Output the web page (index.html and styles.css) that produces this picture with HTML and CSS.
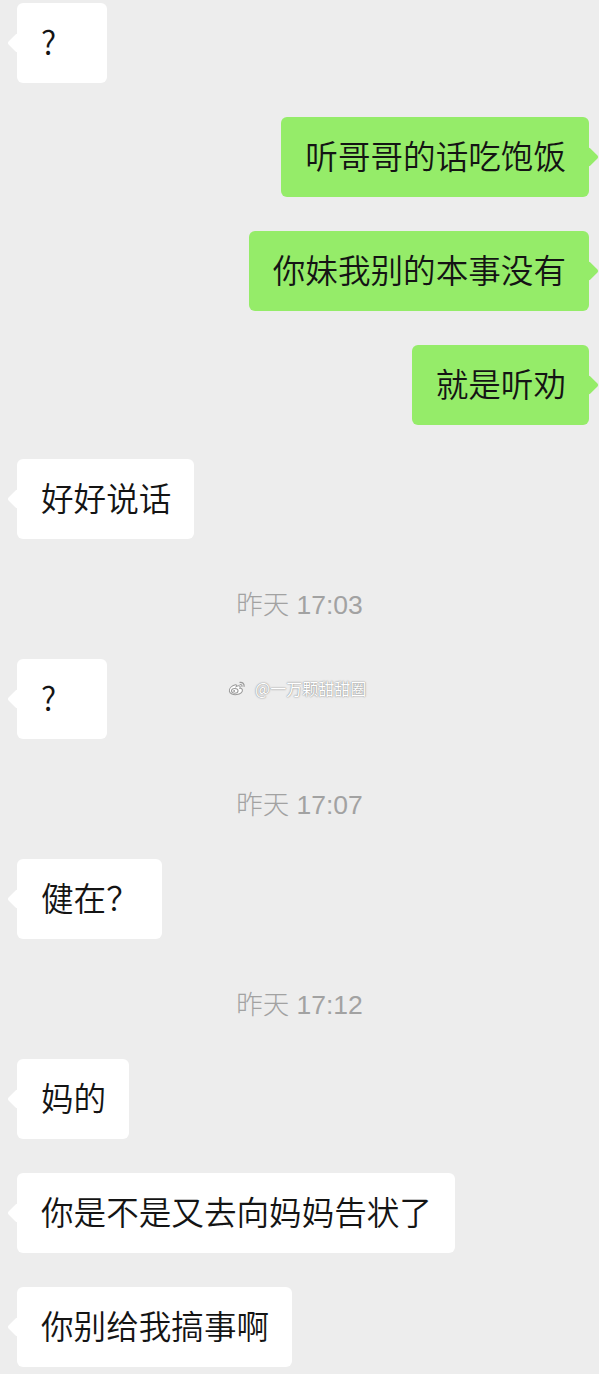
FILE: index.html
```html
<!DOCTYPE html>
<html lang="zh">
<head>
<meta charset="utf-8">
<title>chat</title>
<link rel="stylesheet" href="styles.css">
</head>
<body>
<div class="chat">
  <div class="row left"><div class="bubble minw">?</div></div>
  <div class="row right"><div class="bubble green">听哥哥的话吃饱饭</div></div>
  <div class="row right"><div class="bubble green">你妹我别的本事没有</div></div>
  <div class="row right"><div class="bubble green">就是听劝</div></div>
  <div class="row left"><div class="bubble">好好说话</div></div>
  <div class="time">昨天 17:03</div>
  <div class="row left"><div class="bubble minw">?</div></div>
  <div class="time">昨天 17:07</div>
  <div class="row left"><div class="bubble">健在？</div></div>
  <div class="time">昨天 17:12</div>
  <div class="row left"><div class="bubble">妈的</div></div>
  <div class="row left"><div class="bubble">你是不是又去向妈妈告状了</div></div>
  <div class="row left"><div class="bubble">你别给我搞事啊</div></div>
  <div class="watermark">
    <svg class="wb" width="18" height="16" viewBox="0 0 17 15">
      <path d="M7 4.5 C3.5 5.5 1 8 1.3 10.4 C1.7 13 5 14.2 8.3 13.7 C11.8 13.2 14 11.2 13.6 9.2 C13.3 7.9 12 7.6 11.2 7.8 C11.8 6.6 11.6 5.6 10.3 5.4 C9.3 5.3 8.3 5.8 7.7 6.2 C8.1 5.1 8.2 4.3 7 4.5 Z" fill="#fff" stroke="#9a9a9a" stroke-width="1"/>
      <ellipse cx="6.4" cy="10.2" rx="3.1" ry="2.3" fill="none" stroke="#9a9a9a" stroke-width="1"/>
      <circle cx="5.8" cy="10.4" r="0.9" fill="#9a9a9a"/>
      <path d="M11.3 2.2 C13.6 1.8 15.6 3.6 15.2 6" fill="none" stroke="#9a9a9a" stroke-width="1.1" stroke-linecap="round"/>
      <path d="M11.4 4.2 C12.6 4.1 13.4 4.9 13.2 6" fill="none" stroke="#9a9a9a" stroke-width="1" stroke-linecap="round"/>
    </svg>
    <span class="wm-text">@一万颗甜甜圈</span>
  </div>
</div>
</body>
</html>
```

FILE: styles.css
```css
html, body {
  margin: 0;
  padding: 0;
  background: #ededed;
}
body {
  width: 599px;
  height: 1374px;
  overflow: hidden;
  font-family: "Noto Sans CJK SC", "Noto Sans", "Liberation Sans", sans-serif;
}
.chat {
  position: relative;
  display: flex;
  flex-direction: column;
  gap: 34px;
  padding-top: 3px;
}
.row {
  display: flex;
}
.row.left {
  justify-content: flex-start;
  padding-left: 17px;
}
.row.right {
  justify-content: flex-end;
  padding-right: 10px;
}
.bubble {
  position: relative;
  height: 80px;
  box-sizing: border-box;
  display: flex;
  align-items: center;
  padding: 0 23px 6px 24px;
  background: #ffffff;
  border-radius: 6px;
  font-size: 32.6px;
  font-weight: 350;
  color: #141414;
  white-space: nowrap;
}
.bubble.minw {
  min-width: 90px;
}
.bubble::before {
  content: "";
  position: absolute;
  top: 33px;
  width: 14px;
  height: 14px;
  background: inherit;
  border-radius: 2px;
  transform: rotate(45deg);
}
.row.left .bubble::before {
  left: -7px;
}
.row.right .bubble::before {
  right: -7px;
}
.bubble.green {
  background: #95ec69;
}
.time {
  height: 52px;
  box-sizing: border-box;
  padding-top: 12px;
  line-height: 40px;
  text-align: center;
  font-family: "Liberation Sans", "Noto Sans CJK SC", sans-serif;
  font-size: 26.5px;
  font-weight: 300;
  color: #a2a2a2;
}
.watermark {
  position: absolute;
  left: 228px;
  top: 676px;
  display: flex;
  align-items: center;
  gap: 9px;
}
.wb {
  display: block;
}
.wm-text {
  font-size: 16px;
  color: #ffffff;
  text-shadow: 0 0 1px #8a8a8a, 0 0 2px #9a9a9a;
}
```
